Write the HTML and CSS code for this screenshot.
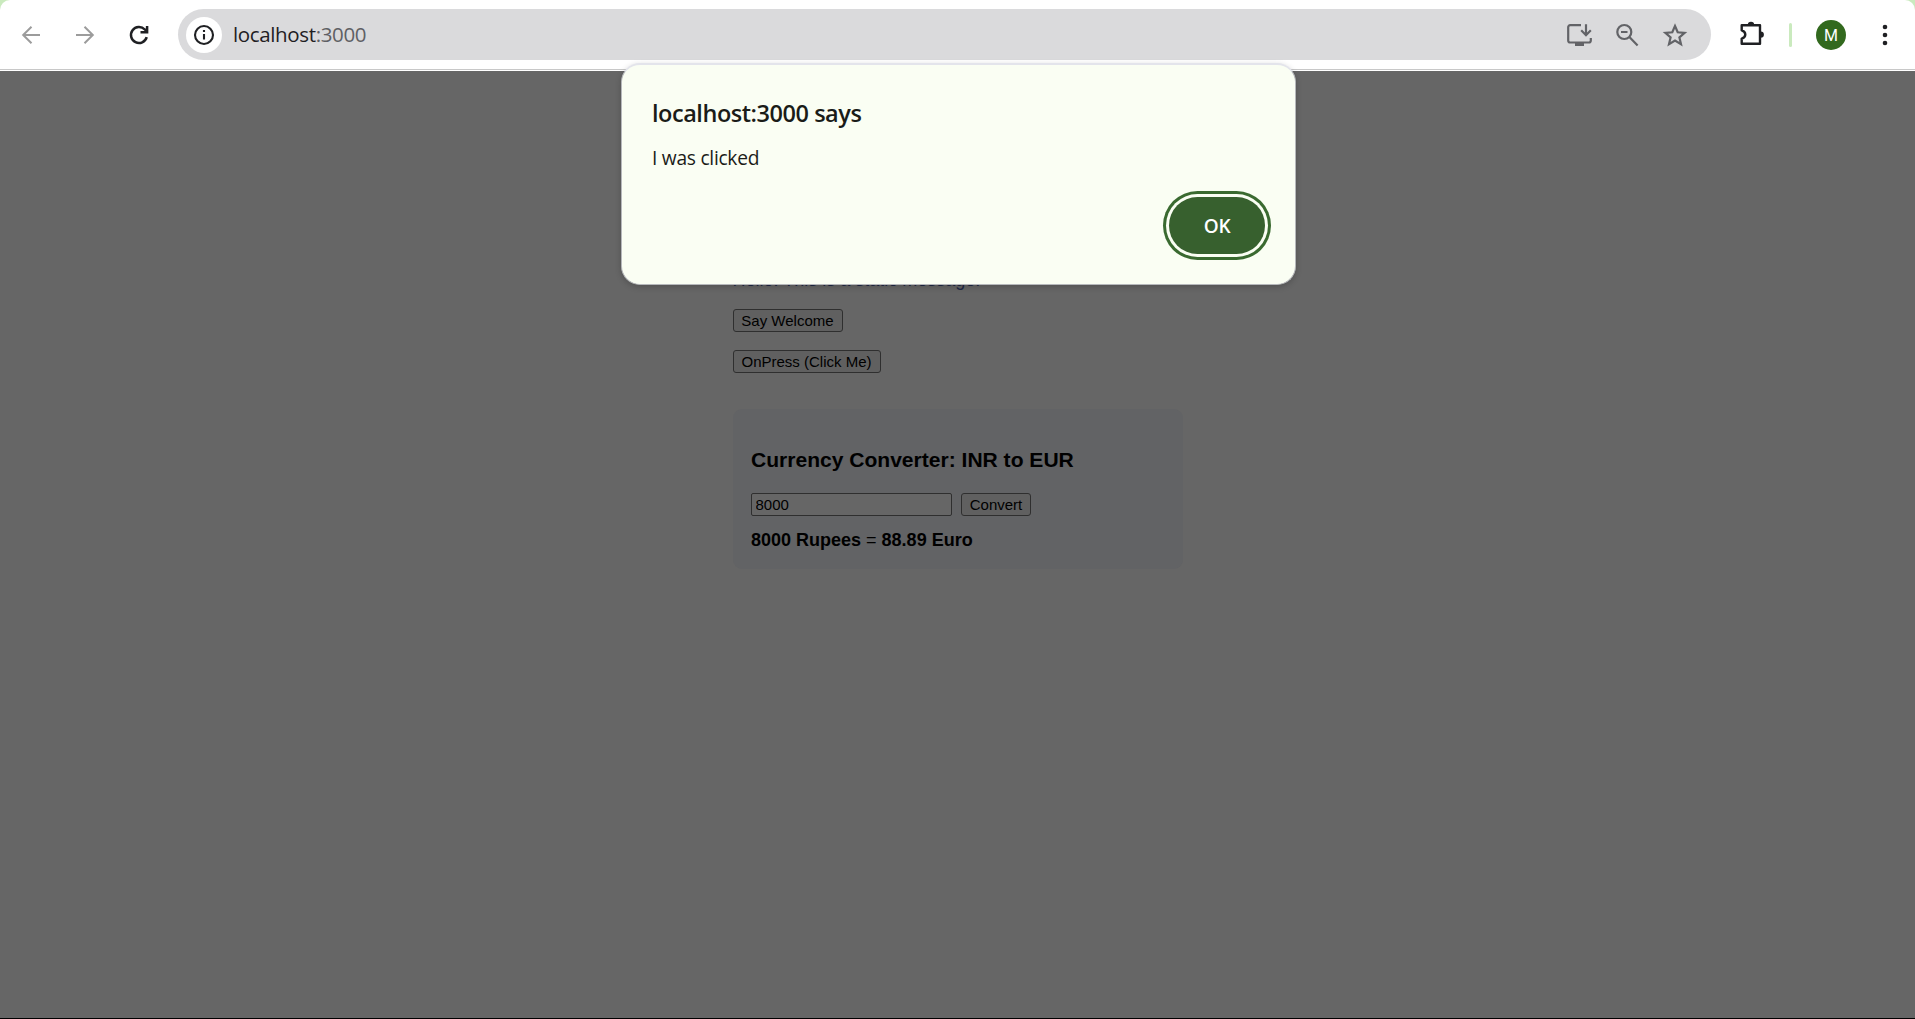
FILE: index.html
```html
<!DOCTYPE html>
<html lang="en">
<head>
<meta charset="utf-8">
<title>localhost:3000</title>
<link rel="stylesheet" href="styles.css">
</head>
<body>
<div class="browser">
  <header class="toolbar">
    <nav class="nav">
      <svg class="icon muted" viewBox="0 0 24 24"><path d="M21 12H4M12.5 3.8 4.2 12l8.3 8.2"/></svg>
      <svg class="icon muted" viewBox="0 0 24 24"><path d="M3 12h17M11.5 3.8l8.3 8.2-8.3 8.2"/></svg>
      <svg class="icon dark" viewBox="0 0 24 24"><path d="M19.7 14.2A8 8 0 1 1 17.8 6.5L20 8.7M20.1 3v6.3h-6.6"/></svg>
    </nav>
    <div class="address">
      <span class="site-info"><svg viewBox="0 0 24 24"><circle cx="12" cy="12" r="9"/><path d="M12 11v5.6M12 7v2"/></svg></span>
      <span class="url"><span class="host">localhost</span>:3000</span>
      <div class="actions">
        <svg class="action" viewBox="0 0 26 26"><path d="M15 3.2H4.2a2 2 0 0 0-2 2v13.3a2 2 0 0 0 2 2h18.6a2 2 0 0 0 2-2V16M20 2.2v10.3M15.2 8.3l4.8 4.9 4.8-4.9"/><path class="fill" d="M9 20.5h9v3.5H9z"/></svg>
        <svg class="action" viewBox="0 0 26 26"><circle cx="10.3" cy="10" r="7"/><path d="M15.4 15.1l8.2 8.4M7 10h6.5"/></svg>
        <svg class="action" viewBox="0 0 26 26"><path stroke-linejoin="miter" d="M13 4l2.7 6.3 6.9.6-5.2 4.5 1.6 6.7-6-3.6-6 3.6 1.6-6.7-5.2-4.5 6.9-.6z"/></svg>
      </div>
    </div>
    <svg class="puzzle" viewBox="0 0 28 28"><path d="M4.7 6.3H23v18.5H4.7v-5.2c4.8-1.4 4.8-6.9 0-8.3z"/><path class="fill" d="M10.8 6a3.2 3.2 0 0 1 6.4 0zM23.7 12.4a3.2 3.2 0 0 1 0 6.4z"/></svg>
    <span class="divider"></span>
    <span class="avatar">M</span>
    <svg class="menu" viewBox="0 0 6 22"><circle cx="3" cy="3" r="2.3"/><circle cx="3" cy="11" r="2.3"/><circle cx="3" cy="19" r="2.3"/></svg>
  </header>
  <main class="page">
    <div class="content">
      <p class="message">Hello! This is a static message.</p>
      <button class="button welcome">Say Welcome</button>
      <button class="button press">OnPress (Click Me)</button>
      <section class="card">
        <h3 class="card-title">Currency Converter: INR to EUR</h3>
        <div class="form">
          <input class="amount" type="text" value="8000">
          <button class="button convert">Convert</button>
        </div>
        <p class="result"><strong>8000 Rupees</strong> = <strong>88.89 Euro</strong></p>
      </section>
    </div>
  </main>
  <div class="dialog">
    <h1 class="dialog-title">localhost:3000 says</h1>
    <p class="dialog-text">I was clicked</p>
    <button class="ok">OK</button>
  </div>
</div>
</body>
</html>
```
FILE: styles.css
```css
* { box-sizing: border-box; }
body { margin: 0; background: #caeabe; overflow: hidden; }
svg { display: block; flex: none; fill: none; stroke: currentColor; stroke-width: 2; }
svg .fill { fill: currentColor; stroke: none; }

.browser { position: relative; height: 1019px; display: flex; flex-direction: column; }
.toolbar {
  height: 71px; flex: none; display: flex; align-items: flex-start;
  background: linear-gradient(#fff 69px, #c8c8c8 69px, #c8c8c8 70px, #fff 70px);
  border-radius: 10px 10px 0 0;
  padding: 9px 26px 0 19px;
  font-family: "Open Sans", sans-serif;
}
.nav { display: flex; gap: 30px; height: 51px; align-items: center; width: 159px; }
.icon { width: 24px; height: 24px; }
.muted { color: #9c9c9c; }
.dark { color: #1f2023; stroke-width: 2.5; }
.address {
  width: 1533px; height: 51px; border-radius: 26px; background: #dadadc;
  display: flex; align-items: center; padding: 0 23px 0 8px;
}
.site-info {
  width: 36px; height: 36px; border-radius: 50%; background: #fff; color: #1f2023;
  display: flex; align-items: center; justify-content: center;
}
.site-info svg { width: 24px; height: 24px; stroke-width: 2.1; }
.url { margin-left: 11px; padding-bottom: 2px; font-size: 20.5px; letter-spacing: -0.36px; line-height: 50px; color: #5f6064; }
.host { color: #1f2023; }
.actions { margin-left: auto; display: flex; gap: 22px; color: #626367; }
.action { width: 26px; height: 26px; stroke-width: 2.2; }
.puzzle { width: 28px; height: 28px; margin: 10px 0 0 26px; color: #1f2023; stroke-width: 2.4; stroke-linejoin: round; }
.divider { width: 3px; height: 24px; border-radius: 2px; background: #caeabe; margin: 14px 0 0 24px; }
.avatar {
  width: 30px; height: 30px; border-radius: 50%; background: #32691e; color: #fff;
  margin: 11px 0 0 24px; text-align: center; font: 16px/31px Roboto, sans-serif;
}
.menu { width: 6px; height: 22px; margin: 15px 0 0 36px; fill: #1f2023; stroke: none; }

.page { flex: 1; background: #666; border-bottom: 1px solid #000; font-family: "Liberation Sans", Arial, sans-serif; }
.content { width: 450px; margin: 0 auto; padding-top: 198px; display: flex; flex-direction: column; align-items: flex-start; }
.message { margin: 0; font-size: 18px; line-height: 22px; color: #202845; }
.button {
  height: 23px; padding: 0; border: 1px solid #2f2f2f; border-radius: 3px; background: #606060;
  font: 15px/19px "Liberation Sans", Arial, sans-serif; color: #000;
}
.welcome { width: 110px; margin-top: 18px; }
.press { width: 148px; margin-top: 18px; }
.card { width: 450px; height: 160px; margin-top: 36px; padding: 39px 18px 0 18.5px; border-radius: 9px; background: #626365; }
.card-title { margin: 0; font-size: 21.06px; line-height: 24px; }
.form { display: flex; gap: 9px; margin-top: 21px; }
.amount {
  width: 201px; height: 23px; padding: 0 3px 0 3.5px; border: 1px solid #2f2f2f; border-radius: 2px;
  background: #666; color: #000; font: 15px "Liberation Sans", Arial, sans-serif;
}
.convert { width: 70px; }
.result { margin: 13px 0 0; font-size: 18px; line-height: 22px; }

.dialog {
  position: absolute; left: 621px; top: 63px; width: 675px; height: 222px;
  display: flex; flex-direction: column;
  border: 1px solid #b6b8bb; border-top: 2px solid #e3e4eb; border-radius: 19px;
  background: #fafef3; padding: 30px 30px 0; color: #1a1c18;
  box-shadow: 0 2px 6px rgba(0, 0, 0, .2);
  font-family: "Open Sans", sans-serif;
}
.dialog-title { margin: 0; font-size: 23.5px; font-weight: 600; letter-spacing: -0.46px; line-height: 36px; }
.dialog-text { margin: 13px 0 0; font-size: 19.2px; letter-spacing: -0.27px; line-height: 28px; }
.ok {
  align-self: flex-end; width: 96px; height: 57px; margin-top: 25px; padding: 1px 0 0;
  border: 0; border-radius: 28.5px; background: #37602e; color: #fff;
  box-shadow: 0 0 0 3px #fafef3, 0 0 0 6px #3a6a30;
  font: 600 19px/56px "Open Sans", sans-serif; letter-spacing: -0.4px;
}
```
